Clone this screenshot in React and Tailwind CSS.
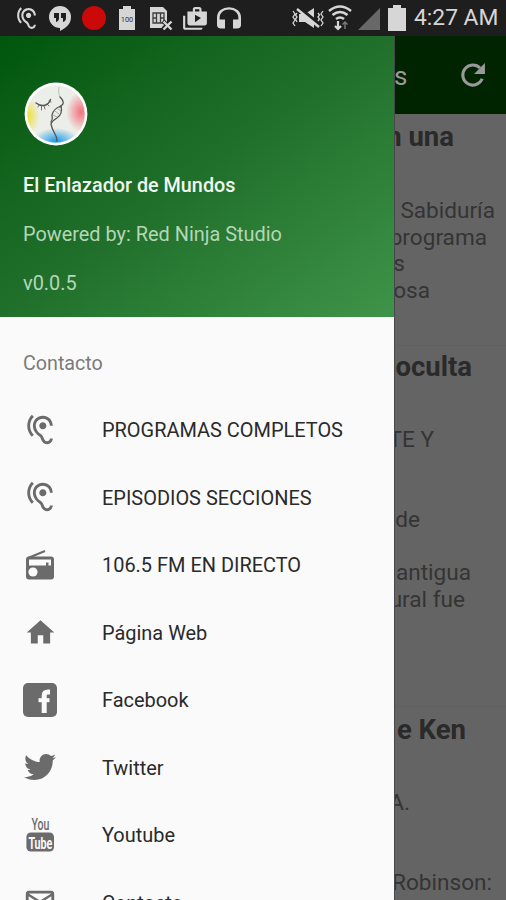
import React from "react";
import {
  MdHome,
  MdMailOutline,
  MdShopTwo,
  MdHeadset,
} from "react-icons/md";
import { FaTwitter } from "react-icons/fa";

function HearingIcon({ className }) {
  return (
    <svg viewBox="0 0 24 24" fill="currentColor" className={className}>
      <path d="M17 20c-.29 0-.56-.06-.76-.15-.71-.37-1.21-.88-1.71-2.38-.51-1.56-1.47-2.29-2.39-3-.79-.61-1.61-1.24-2.32-2.53C9.29 10.98 9 9.93 9 9c0-2.8 2.2-5 5-5s5 2.2 5 5h2c0-3.93-3.07-7-7-7S7 5.07 7 9c0 1.26.38 2.65 1.07 3.9.91 1.65 1.98 2.48 2.85 3.15.81.62 1.39 1.07 1.71 2.05.6 1.82 1.37 2.84 2.73 3.55.51.23 1.07.35 1.64.35 2.21 0 4-1.79 4-4h-2c0 1.1-.9 2-2 2zM7.64 2.64L6.22 1.22C4.23 3.21 3 5.96 3 9s1.23 5.79 3.22 7.78l1.41-1.41C6.01 13.74 5 11.49 5 9s1.01-4.74 2.64-6.36zM11.5 9c0 1.38 1.12 2.5 2.5 2.5s2.5-1.12 2.5-2.5-1.12-2.5-2.5-2.5-2.5 1.12-2.5 2.5z" />
    </svg>
  );
}

function RadioIcon() {
  return (
    <svg viewBox="0 0 34 34" className="size-[34px]">
      <path d="M5 10L22 3" stroke="currentColor" strokeWidth="2" />
      <rect x="3" y="8.500" width="28" height="23" rx="3" fill="currentColor" />
      <path d="M6 11.500h22v6h-2.500v-3h-2.500v3H6z" fill="#fafafa" />
      <circle cx="10" cy="24" r="4.600" fill="#fafafa" />
    </svg>
  );
}

function FacebookIcon() {
  return (
    <svg viewBox="0 0 34 34" className="size-[34px]">
      <rect width="34" height="34" rx="5" fill="currentColor" />
      <path d="M27 8.9h-2q-3.800 0-3.800 3.700V30" fill="none" stroke="#fafafa" strokeWidth="5" />
      <path d="M15.500 17.200h11" stroke="#fafafa" strokeWidth="4" />
    </svg>
  );
}

function YoutubeIcon() {
  return (
    <svg viewBox="0 0 34 36" className="h-9 w-[34px]" fontFamily="Roboto, sans-serif">
      <text x="8.500" y="13" fontSize="16" fontWeight="500" textLength="18" lengthAdjust="spacingAndGlyphs" fill="currentColor">You</text>
      <rect x="3.400" y="15.500" width="27.600" height="19" rx="4.500" fill="currentColor" />
      <text x="5.400" y="31.500" fontSize="17" fontWeight="700" textLength="24" lengthAdjust="spacingAndGlyphs" fill="#fafafa">Tube</text>
    </svg>
  );
}

function Avatar() {
  return (
    <svg viewBox="0 0 64 64" className="size-16">
      <defs>
        <radialGradient id="yellow"><stop offset="0" stopColor="#eee03a" /><stop offset="1" stopColor="#eee03a" stopOpacity="0" /></radialGradient>
        <radialGradient id="red"><stop offset="0" stopColor="#f4717b" /><stop offset="1" stopColor="#f4717b" stopOpacity="0" /></radialGradient>
        <radialGradient id="blue"><stop offset="0" stopColor="#189be8" /><stop offset="1" stopColor="#189be8" stopOpacity="0" /></radialGradient>
        <clipPath id="face"><circle cx="32" cy="32" r="28.8" /></clipPath>
      </defs>
      <circle cx="32" cy="32" r="31.4" fill="#fff" />
      <g clipPath="url(#face)">
        <rect width="64" height="64" fill="#eceeea" />
        <ellipse cx="4" cy="34" rx="12" ry="19" fill="url(#yellow)" />
        <ellipse cx="57" cy="30" rx="15" ry="20" fill="url(#red)" />
        <ellipse cx="32" cy="59" rx="23" ry="13" fill="url(#blue)" />
      </g>
      <g fill="none" stroke="#555" strokeLinecap="round">
        <path d="M12 21q4 3 8 2.500q5-1 6.500-6" strokeWidth="1.400" />
        <path d="M15 23l-1 2M17.500 24v4M20 24l1 3M23 22l2 2M25 19l2 1" strokeWidth=".8" />
        <path d="M35 5q-1 7 1 10" stroke="#aaa" strokeWidth=".7" />
        <path d="M36 15q4 4 3 7l-3 3" strokeWidth="1.300" />
        <path d="M37 24q2 8-4 12q-5 3-6 6q1 5 3 8q3 5 3 9" strokeWidth="1.300" />
        <path d="M37 24q-8 3-9 9q1 4-1 7" strokeWidth="1.300" />
        <path d="M34 27l3 2M31 29l4 3M29 33l4 2" stroke="#888" strokeWidth=".7" />
      </g>
    </svg>
  );
}

function StatusBar() {
  return (
    <header className="flex h-9 w-full shrink-0 items-center bg-[#1e1e1e] text-[#d6d6d6]">
      <HearingIcon className="ml-[14px] size-[25px] shrink-0" />
      <svg viewBox="0 0 24 26" className="ml-[9px] h-[26px] w-6 shrink-0">
        <path d="M12 1a11 11 0 0 0 0 22v3c6-3 11-7 11-14A11 11 0 0 0 12 1z" fill="currentColor" />
        <path d="M6 8h5v5q0 3-3 4v-4H6zM13 8h5v5q0 3-3 4v-4h-2z" fill="#1e1e1e" />
      </svg>
      <div className="ml-[10px] size-6 shrink-0 rounded-full bg-[#cc0909]" />
      <svg viewBox="0 0 18 26" className="ml-[12px] h-[26px] w-[18px] shrink-0">
        <path d="M5 1h8v3h4v21H1V4h4z" fill="currentColor" />
        <text x="9" y="16.500" textAnchor="middle" fontSize="7.500" fontFamily="Roboto, sans-serif" fill="#333">100</text>
      </svg>
      <svg viewBox="0 0 24 26" className="ml-[13px] h-[26px] w-6 shrink-0">
        <path d="M1 2h13l4 4v17H1z" fill="currentColor" />
        <path d="M4 8h11v10H4zM7.500 8v10M11.500 8v10M4 13h3M12 13h3" fill="none" stroke="#3c3c3c" strokeWidth="1.300" />
        <path d="M14 16l8 8m0-8l-8 8" stroke="#1e1e1e" strokeWidth="4" />
        <path d="M14.500 16.500l8 8m0-8l-8 8" stroke="currentColor" strokeWidth="2.400" />
      </svg>
      <MdShopTwo className="ml-[9px] mt-px size-[26px] shrink-0" />
      <MdHeadset className="ml-[5px] mt-[3px] h-[27px] w-[32px] shrink-0" preserveAspectRatio="none" />
      <svg viewBox="0 0 34 24" className="ml-[46px] h-6 w-[34px] shrink-0" fill="none" stroke="currentColor">
        <path d="M8 8h6l9-6v20l-9-6H8z" fill="currentColor" stroke="none" />
        <path d="M8 2l21 17" stroke="#1e1e1e" strokeWidth="4" />
        <path d="M6 3l22 18" strokeWidth="2.400" />
        <path d="M2 5l2 3-2 3 2 3-2 3 2 3M6 7l-1.500 2L6 11l-1.500 2L6 16M32 5l-2 3 2 3-2 3 2 3-2 3M27 7l1.500 2-1.500 2 1.500 2-1.500 2" strokeWidth="1.300" />
      </svg>
      <svg viewBox="0 0 24 28" className="ml-[3px] h-7 w-6 shrink-0" fill="none" stroke="currentColor">
        <path d="M1 7q11-9 22 0M4.500 11q7.500-6 15 0M8 15q4-3 8 0" strokeWidth="2.600" />
        <path d="M10 17v8m-3-3l3 3 3-3" strokeWidth="2.200" />
        <path d="M17 25v-7m-2.500 2.500L17 18l2.500 2.500" stroke="#777" strokeWidth="1.500" />
      </svg>
      <svg viewBox="0 0 22 22" className="ml-[6px] mt-[2px] size-[22px] shrink-0"><path d="M22 0v22H0z" fill="#686868" /></svg>
      <svg viewBox="0 0 18 26" className="ml-[8px] h-[26px] w-[18px] shrink-0"><path d="M5 0h8v3h5v23H0V3h5z" fill="currentColor" /></svg>
      <span className="ml-[8px] whitespace-nowrap text-[22.8px] leading-9">4:27 AM</span>
    </header>
  );
}

const items = [
  { label: "PROGRAMAS COMPLETOS", icon: <HearingIcon className="size-[34px]" /> },
  { label: "EPISODIOS SECCIONES", icon: <HearingIcon className="size-[34px]" /> },
  { label: "106.5 FM EN DIRECTO", icon: <RadioIcon /> },
  { label: "Página Web", icon: <MdHome className="size-[33px]" /> },
  { label: "Facebook", icon: <FacebookIcon /> },
  { label: "Twitter", icon: <FaTwitter className="size-8" /> },
  { label: "Youtube", icon: <YoutubeIcon /> },
  { label: "Contacto", icon: <MdMailOutline className="size-[34px]" /> },
];

function Drawer() {
  return (
    <aside className="flex h-full w-[394px] shrink-0 flex-col bg-[#fafafa]">
      <div className="flex h-[281px] shrink-0 flex-col bg-linear-to-br from-[#00560b] via-[#20702b] to-[#3f9449] pl-[23px] pt-[46px] text-[19.9px] leading-6">
        <div className="ml-px"><Avatar /></div>
        <p className="mt-[28px] text-[19.8px] font-medium text-[#f0f8f0]">El Enlazador de Mundos</p>
        <p className="mt-[25px] text-[#b5d6b7]">Powered by: Red Ninja Studio</p>
        <p className="mt-[25px] text-[#b5d6b7]">v0.0.5</p>
      </div>
      <h2 className="h-[79px] shrink-0 pl-[23px] pt-[35px] text-[19.7px] leading-6 text-[#7b7b7b]">Contacto</h2>
      <nav className="text-[19.95px] text-[#2a2a2a]">
        {items.map((item) => (
          <div key={item.label} className="flex h-[67.5px] items-center">
            <div className="ml-[23px] flex w-[34px] justify-center text-[#6b6b6b]">{item.icon}</div>
            <span className="ml-[45px] pt-px leading-6">{item.label}</span>
          </div>
        ))}
      </nav>
    </aside>
  );
}

function Line({ children, className = "" }) {
  return (
    <p className={`flex h-[26.7px] justify-end overflow-hidden whitespace-nowrap text-[22.6px] leading-[26.7px] ${className}`}>
      {children}
    </p>
  );
}

function Title({ children, className = "" }) {
  return (
    <h3 className={`flex h-[30px] justify-end overflow-hidden whitespace-nowrap text-[27.5px] font-bold leading-[30px] text-[#2a2a2a] ${className}`}>
      {children}
    </h3>
  );
}

function Feed() {
  return (
    <main className="flex h-full min-w-0 flex-1 flex-col overflow-hidden border-l border-[#484848] bg-[#646464] text-[#343434]">
      <div className="flex h-[78px] shrink-0 items-center justify-between bg-[#002300] text-[#999]">
        <span className="-ml-px pt-[3px] text-[26px]">s</span>
        <svg viewBox="0 0 24 24" className="mr-[20px] size-[26px]" fill="none" stroke="currentColor" strokeWidth="2.800">
          <path d="M20.500 15.500A9.300 9.300 0 1 1 18.500 5.500" />
          <path d="M23 1v10H13z" fill="currentColor" stroke="none" />
        </svg>
      </div>
      <article className="h-[232px] shrink-0 border-b border-[#606060] pt-[8px]">
        <Title className="pr-[52px]">n una</Title>
        <div className="mt-[46px]">
          <Line className="pr-[11px]">Sabiduría</Line>
          <Line className="pr-[19px]">programa</Line>
          <Line className="pr-[101px]">s</Line>
          <Line className="pr-[76px]">osa</Line>
        </div>
      </article>
      <article className="h-[361px] shrink-0 border-b border-[#606060] pt-[6px]">
        <Title className="pr-[34px]">oculta</Title>
        <div className="mt-[45px]">
          <Line className="pr-[72px]">TE Y</Line>
          <Line />
          <Line />
          <Line className="pr-[86px]">de</Line>
          <Line />
          <Line className="pr-[35px]">antigua</Line>
          <Line className="pr-[41px]">ural fue</Line>
        </div>
      </article>
      <article className="shrink-0 pt-[8px]">
        <Title className="pr-[40px]">e Ken</Title>
        <div className="mt-[45px]">
          <Line className="pr-[96px]">A.</Line>
          <Line />
          <Line />
          <Line className="pr-[14px]">Robinson:</Line>
        </div>
      </article>
    </main>
  );
}

export default function App() {
  return (
    <div className="flex h-[900px] w-[506px] flex-col overflow-hidden font-[Roboto,sans-serif]">
      <StatusBar />
      <div className="flex h-[864px] overflow-hidden">
        <Drawer />
        <Feed />
      </div>
    </div>
  );
}
